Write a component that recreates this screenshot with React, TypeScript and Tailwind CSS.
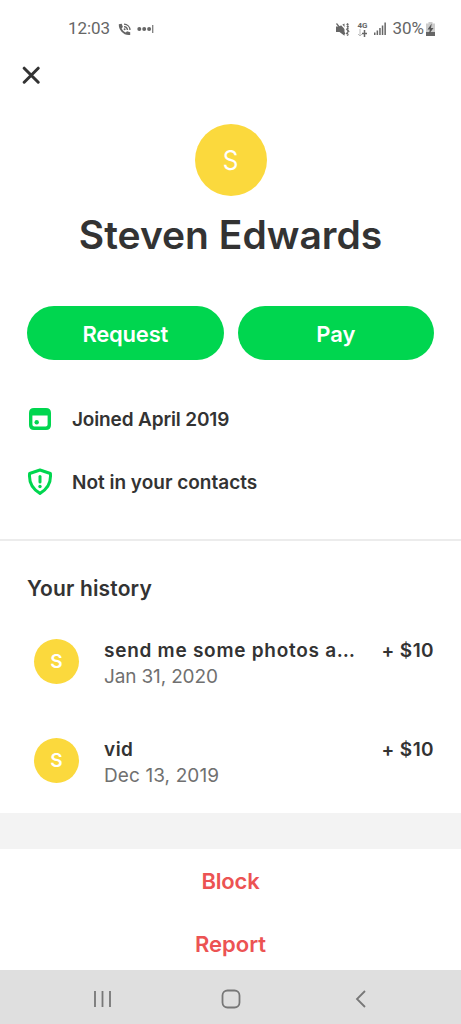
import type { ReactNode } from 'react'

const history = [
  { note: 'send me some photos a…', noteClass: 'tracking-[0.73px]', date: 'Jan 31, 2020', dateClass: 'tracking-[-0.15px]', amount: '+ $10' },
  { note: 'vid', noteClass: 'tracking-[0.5px]', date: 'Dec 13, 2019', dateClass: 'tracking-[0.1px]', amount: '+ $10' },
]

function StatusBar() {
  return (
    <header className="flex h-[58px] shrink-0 items-center pl-[68px] pr-[25px] font-[Roboto] text-[17px] text-[#666]">
      <span className="tracking-[-0.1px]">12:03</span>
      <svg className="ml-[8px]" width="13" height="13" viewBox="0 0 13 13" fill="none">
        <path d="M.8 1.2 3.7.8 4.9 4 3.6 5.2C4.3 7 5.7 8.5 7.8 9.4L9 8.2l3.2 1.1v2.6C6.2 13 .4 7.2.8 1.2Z" fill="#666" />
        <path d="M6 1.1c3.3.1 5.9 2.6 6 6M6 3.6c1.8.1 3.3 1.5 3.5 3.4" stroke="#666" strokeWidth="1.3" />
        <circle cx="6.6" cy="6.2" r="1" fill="#666" />
      </svg>
      <svg className="ml-[6px]" width="17" height="10" viewBox="0 0 17 10" fill="#666">
        <circle cx="2.3" cy="5" r="2" />
        <circle cx="7.2" cy="5" r="2" />
        <circle cx="12.1" cy="5" r="2" />
        <path d="M15.2 1h1.1v8h-1.1z" />
      </svg>

      <svg className="ml-auto" width="15" height="15" viewBox="0 0 15 15" fill="none">
        <path d="M0 4.5h3l5.5-3v12.3L3.5 10H0Z" fill="#666" />
        <path d="M3.5.5 9.500 7" stroke="#fff" strokeWidth="1.3" />
        <path d="m.5 1.5 8.5 10.5" stroke="#666" strokeWidth="1.2" />
        <path d="m12 1.5-1 2 1.400 2-1.400 2 1.400 2-1.400 2 1 2" stroke="#666" strokeWidth="1.9" strokeDasharray="2 .6" />
      </svg>
      <span className="ml-[5px] flex w-[12px] flex-col items-center text-[8px] leading-[7px] font-bold">
        <span>4G</span>
        <svg width="11" height="8" viewBox="0 0 11 8" fill="none">
          <path d="M3 0v7M1 5l2 2 2-2" stroke="#bbb" />
          <path d="M7.5 8V1M5 4.5h5" stroke="#666" strokeWidth="1.5" />
        </svg>
      </span>
      <svg className="ml-[5px]" width="14" height="14" viewBox="0 0 14 14" fill="#666">
        <path d="M1 10.5h1.500V13H1zM3.600 8.500h1.500V13H3.600zM6.200 6h1.500v7H6.200zM8.800 3.500h1.500V13H8.800zM11.400.5h1.500V13h-1.500z" />
      </svg>
      <span className="ml-[5px]">30%</span>
      <svg className="ml-[1px]" width="11" height="14" viewBox="0 0 11 14">
        <path d="M3.500 0h4v1.500H10V14H1V1.500h2.500Z" fill="#ccc" />
        <path d="M1 10h9v4H1z" fill="#666" />
        <path d="M6.700 1.500 2.500 7.500h2.300L4 12l4.500-6H6Z" fill="#555" />
      </svg>
    </header>
  )
}

function Fact({ icon, children }: { icon: ReactNode; children: ReactNode }) {
  return (
    <li className="flex h-[62.5px] items-center">
      <span className="mr-[19px] flex w-[26px] justify-center">{icon}</span>
      {children}
    </li>
  )
}

export default function App() {
  return (
    <div className="flex h-[1024px] w-[461px] flex-col overflow-hidden bg-white font-[Inter,sans-serif] text-[#333]">
      <StatusBar />

      <div className="flex h-[66px] shrink-0 items-start pl-[22px] pt-[8px]">
        <button aria-label="Close">
          <svg width="18" height="18" viewBox="0 0 18 18" fill="none">
            <path d="m2.200 2.200 14 14M16.200 2.200l-14 14" stroke="#333" strokeWidth="3" strokeLinecap="round" />
          </svg>
        </button>
      </div>

      <div className="flex shrink-0 flex-col items-center">
        <div className="flex size-[72px] items-center justify-center rounded-full bg-[#fbd93d] pt-[3px] text-[27px] text-white">
          <span className="scale-x-90">S</span>
        </div>
        <h1 className="mt-[14px] text-[39px] leading-[50px] font-semibold whitespace-nowrap">Steven Edwards</h1>
      </div>

      <div className="mt-[46px] grid shrink-0 grid-cols-2 gap-[14px] px-[27px] text-[22px] font-semibold text-white">
        <button className="h-[54px] rounded-full bg-[#00d64f] pt-[2px] tracking-[-0.2px]">Request</button>
        <button className="h-[54px] rounded-full bg-[#00d64f] pt-[2px]">Pay</button>
      </div>

      <ul className="mt-[28px] shrink-0 px-[27px] text-[19px] font-semibold">
        <Fact
          icon={
            <svg width="22" height="22" viewBox="0 0 22 22">
              <path fillRule="evenodd" d="M5 0h12q5 0 5 5v12q0 5-5 5H5q-5 0-5-5V5q0-5 5-5ZM3.400 7.400v9.200q0 2 2 2h11.200q2 0 2-2V7.400Z" fill="#00d64f" />
              <circle cx="7.700" cy="14.200" r="2.200" fill="#00d64f" />
            </svg>
          }
        >
          <span className="pt-[2px] tracking-[-0.15px]">Joined April 2019</span>
        </Fact>
        <Fact
          icon={
            <svg width="26" height="28" viewBox="0 0 26 28" fill="none">
              <path d="M13 2 23.400 5.500c.8 8.200-1.800 15-10.400 19.900C4.400 20.500 1.800 13.700 2.600 5.500Z" stroke="#00d64f" strokeWidth="3" strokeLinejoin="round" />
              <path d="M13 8.500v5.500" stroke="#00d64f" strokeWidth="3" strokeLinecap="round" />
              <circle cx="13" cy="18.500" r="1.700" fill="#00d64f" />
            </svg>
          }
        >
          <span className="pt-[2px]">Not in your contacts</span>
        </Fact>
      </ul>

      <section className="mt-[26px] h-[274px] shrink-0 border-t-2 border-[#ececec] px-[27px] pt-[33px]">
        <h2 className="text-[21px] leading-[30px] font-semibold tracking-[0.15px]">Your history</h2>
        {history.map((item) => (
          <div key={item.date} className="flex h-[99px] items-start pt-[34px]">
            <span className="mt-[1px] ml-[7px] flex size-[45px] items-center justify-center rounded-full bg-[#fbd93d] pt-[1px] text-[19px] font-semibold text-white">
              S
            </span>
            <div className="ml-[25px] text-[19px] leading-[26px]">
              <p className={`font-semibold whitespace-nowrap ${item.noteClass}`}>{item.note}</p>
              <p className={`text-[#707070] ${item.dateClass}`}>{item.date}</p>
            </div>
            <span className="ml-auto text-[19px] leading-[26px] font-semibold tracking-[0.4px] whitespace-nowrap">
              {item.amount}
            </span>
          </div>
        ))}
      </section>

      <div className="h-[36px] shrink-0 bg-[#f3f3f3]" />

      <div className="flex h-[121px] shrink-0 flex-col items-center pt-[1px] text-[22px] font-semibold text-[#ec5353]">
        <button className="h-[63px] shrink-0 tracking-[-0.2px]">Block</button>
        <button className="h-[63px] shrink-0">Report</button>
      </div>

      <nav className="flex h-[54px] shrink-0 items-center bg-[#dfdfdf] pl-[93px] pt-[3px]">
        <svg width="19" height="18" viewBox="0 0 19 18" fill="none" stroke="#777" strokeWidth="1.8">
          <path d="M2 1v16M9.500 1v16M17 1v16" />
        </svg>
        <svg className="ml-[109px]" width="20" height="20" viewBox="0 0 20 20" fill="none" stroke="#777" strokeWidth="1.8">
          <rect x="1.500" y="1.500" width="17" height="17" rx="5" />
        </svg>
        <svg className="ml-[114px]" width="12" height="18" viewBox="0 0 12 18" fill="none" stroke="#777" strokeWidth="1.8">
          <path d="m10 1-8 8 8 8" />
        </svg>
      </nav>
    </div>
  )
}
